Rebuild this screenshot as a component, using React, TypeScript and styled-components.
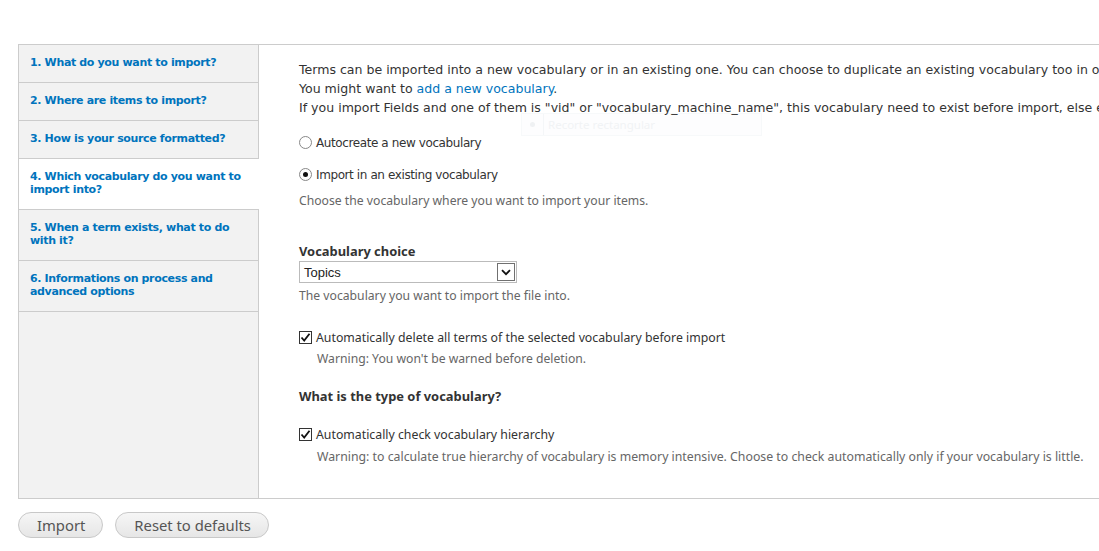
import React from "react";
import styled, { createGlobalStyle } from "styled-components";

const Global = createGlobalStyle`
  html { background: #fff; }
  html, body { margin: 0; padding: 0; overflow: hidden; }
  body { font-family: "DejaVu Sans", Verdana, sans-serif; color: #333; }
`;

const Page = styled.div`
  position: relative;
  padding: 44px 0 0 18px;
  width: 1400px;
`;

const Frame = styled.div`
  display: flex;
  border-top: 1px solid #ccc;
  border-bottom: 1px solid #ccc;
  border-left: 1px solid #ccc;
  height: 453px;
`;

const Sidebar = styled.ul`
  list-style: none;
  margin: 0;
  padding: 0;
  width: 239px;
  flex: none;
  background: #f2f2f2;
  border-right: 1px solid #ccc;
  display: flex;
  flex-direction: column;
`;

const Tab = styled.li<{ $active?: boolean }>`
  padding: 11px 12px 13px 11px;
  border-bottom: 1px solid #ccc;
  background: ${(p) => (p.$active ? "#fff" : "transparent")};
  margin-right: ${(p) => (p.$active ? "-1px" : "0")};
  font-size: 11px;
  line-height: 13px;
  a {
    font-family: "DejaVu Sans", sans-serif;
    font-weight: bold;
    font-size: 11px;
    line-height: 13px;
    color: #0074bd;
    text-decoration: none;
    letter-spacing: -0.35px;
  }
`;

const Content = styled.div`
  flex: 1;
  padding: 15px 0 0 40px;
  font-size: 12px;
`;

const Intro = styled.p`
  margin: 0;
  white-space: nowrap;
  line-height: 19px;
  font-size: 12.55px;
  color: #333;
  a { color: #0074bd; text-decoration: none; }
`;

const ChoiceRow = styled.label<{ $mt: number }>`
  display: flex;
  align-items: center;
  gap: 4px;
  margin-top: ${(p) => p.$mt}px;
  height: 19px;
  font-size: 12px;
  color: #333;
  font-family: "DejaVu Sans", sans-serif;
  letter-spacing: -0.4px;
`;

const CheckRow = styled(ChoiceRow)`
  font-family: "Noto Sans", "Open Sans", sans-serif;
  font-size: 12.3px;
  letter-spacing: 0;
`;

const Radio = styled.span<{ $on?: boolean }>`
  width: 11px;
  height: 11px;
  border: 1px solid #888;
  border-radius: 50%;
  background: #fff;
  display: inline-flex;
  align-items: center;
  justify-content: center;
  flex: none;
  &::after {
    content: "";
    width: 5px;
    height: 5px;
    border-radius: 50%;
    background: ${(p) => (p.$on ? "#111" : "transparent")};
  }
`;

const Box = styled.span`
  width: 11px;
  height: 11px;
  border: 1px solid #333;
  background: #fff;
  display: inline-flex;
  align-items: center;
  justify-content: center;
  flex: none;
`;

const Desc = styled.div<{ $mt: number; $indent?: boolean }>`
  margin-top: ${(p) => p.$mt}px;
  margin-left: ${(p) => (p.$indent ? 18 : 0)}px;
  line-height: 18px;
  font-size: 12.2px;
  color: #666;
  font-family: "Noto Sans", "Open Sans", sans-serif;
`;

const WideDesc = styled(Desc)`
  font-size: 12.3px;
`;

const Heading = styled.div<{ $mt: number }>`
  margin-top: ${(p) => p.$mt}px;
  font-weight: bold;
  font-size: 12.9px;
  line-height: 18px;
  color: #333;
  font-family: "Noto Sans", "Open Sans", sans-serif;
`;

const Select = styled.div`
  margin-top: 1px;
  width: 211px;
  height: 20px;
  border: 1px solid #bbb;
  display: flex;
  align-items: center;
  justify-content: space-between;
  padding: 0 1px 0 4px;
  box-sizing: content-box;
  font-family: "Liberation Sans", Arial, sans-serif;
  font-size: 13px;
  color: #222;
  background: #fff;
`;

const Arrow = styled.span`
  width: 16px;
  height: 16px;
  border: 1px solid #707070;
  display: inline-flex;
  align-items: center;
  justify-content: center;
  background: #fff;
`;

const Actions = styled.div`
  display: flex;
  gap: 12px;
  margin-top: 13px;
`;

const Button = styled.button`
  height: 26px;
  padding: 0 17px 0 18px;
  border: 1px solid #c8c8c8;
  border-radius: 13px;
  background: linear-gradient(#f6f6f6, #e6e6e6);
  font-family: "Noto Sans", "Open Sans", sans-serif;
  font-size: 14.8px;
  color: #555;
  cursor: pointer;
`;

const Ghost = styled.div`
  position: absolute;
  z-index: -1;
  left: 521px;
  top: 113px;
  width: 239px;
  height: 21px;
  display: flex;
  border: 1px solid #f7f9fa;
  background: #fdfdfe;
  font-family: "Noto Sans", sans-serif;
  font-size: 11.5px;
  color: #f1f3f5;
  align-items: center;
`;

const GhostIcon = styled.span`
  width: 21px;
  height: 21px;
  border-right: 1px solid #f4f6f8;
  display: flex;
  align-items: center;
  justify-content: center;
  margin-right: 4px;
  &::after {
    content: "";
    width: 5px;
    height: 5px;
    border-radius: 50%;
    background: #eff1f3;
  }
`;

const Tick = () => (
  <svg width="11" height="11" viewBox="0 0 11 11">
    <path d="M1.5 5.5 L4.2 8.5 L9.5 1.8" fill="none" stroke="#111" strokeWidth="1.8" />
  </svg>
);

const Chevron = () => (
  <svg width="10" height="7" viewBox="0 0 10 7">
    <path d="M1 1.2 L5 5.2 L9 1.2" fill="none" stroke="#111" strokeWidth="1.8" />
  </svg>
);

const tabs = [
  "1. What do you want to import?",
  "2. Where are items to import?",
  "3. How is your source formatted?",
  "4. Which vocabulary do you want to import into?",
  "5. When a term exists, what to do with it?",
  "6. Informations on process and advanced options",
];

export default function App() {
  return (
    <>
      <Global />
      <Page>
        <Frame>
          <Sidebar>
            {tabs.map((t, i) => (
              <Tab key={t} $active={i === 3}>
                <a href="#">{t}</a>
              </Tab>
            ))}
          </Sidebar>
          <Content>
            <Intro>
              Terms can be imported into a new vocabulary or in an existing one. You can choose to duplicate an existing vocabulary too in order to keep the original one.
            </Intro>
            <Intro>
              You might want to <a href="#">add a new vocabulary</a>.
            </Intro>
            <Intro>
              If you import Fields and one of them is "vid" or "vocabulary_machine_name", this vocabulary need to exist before import, else error.
            </Intro>
            <ChoiceRow $mt={16}>
              <Radio />
              Autocreate a new vocabulary
            </ChoiceRow>
            <ChoiceRow $mt={13}>
              <Radio $on />
              Import in an existing vocabulary
            </ChoiceRow>
            <Desc $mt={8}>Choose the vocabulary where you want to import your items.</Desc>
            <Heading $mt={32}>Vocabulary choice</Heading>
            <Select>
              Topics
              <Arrow>
                <Chevron />
              </Arrow>
            </Select>
            <Desc $mt={4}>The vocabulary you want to import the file into.</Desc>
            <CheckRow $mt={23}>
              <Box>
                <Tick />
              </Box>
              Automatically delete all terms of the selected vocabulary before import
            </CheckRow>
            <Desc $mt={3} $indent>
              Warning: You won't be warned before deletion.
            </Desc>
            <Heading $mt={19}>What is the type of vocabulary?</Heading>
            <CheckRow $mt={20}>
              <Box>
                <Tick />
              </Box>
              Automatically check vocabulary hierarchy
            </CheckRow>
            <WideDesc $mt={4} $indent>
              Warning: to calculate true hierarchy of vocabulary is memory intensive. Choose to check automatically only if your vocabulary is little.
            </WideDesc>
          </Content>
        </Frame>
        <Actions>
          <Button>Import</Button>
          <Button>Reset to defaults</Button>
        </Actions>
        <Ghost>
          <GhostIcon />
          Recorte rectangular
        </Ghost>
      </Page>
    </>
  );
}
